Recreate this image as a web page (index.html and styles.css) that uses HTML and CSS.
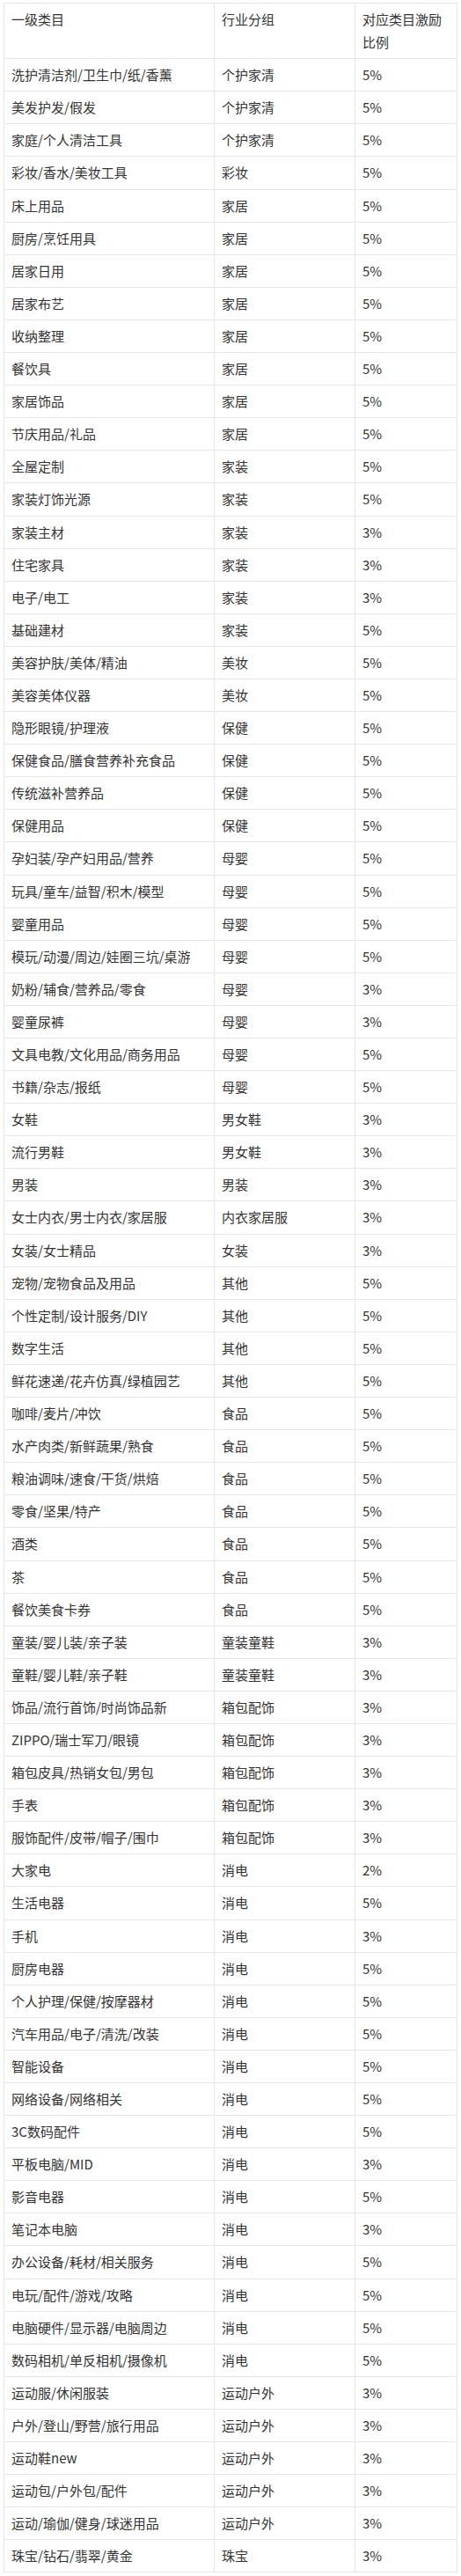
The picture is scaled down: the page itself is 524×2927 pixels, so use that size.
FILE: index.html
```html
<!DOCTYPE html>
<html lang="zh-CN">
<head>
<meta charset="utf-8">
<title>类目激励比例</title>
<link rel="stylesheet" href="styles.css">
</head>
<body>
<div class="page">
<table class="rate-table">
<colgroup>
<col class="col-cat">
<col class="col-group">
<col class="col-rate">
</colgroup>
<thead>
<tr><th>一级类目</th><th>行业分组</th><th>对应类目激励比例</th></tr>
</thead>
<tbody>
<tr><td>洗护清洁剂/卫生巾/纸/香薰</td><td>个护家清</td><td>5%</td></tr>
<tr><td>美发护发/假发</td><td>个护家清</td><td>5%</td></tr>
<tr><td>家庭/个人清洁工具</td><td>个护家清</td><td>5%</td></tr>
<tr><td>彩妆/香水/美妆工具</td><td>彩妆</td><td>5%</td></tr>
<tr><td>床上用品</td><td>家居</td><td>5%</td></tr>
<tr><td>厨房/烹饪用具</td><td>家居</td><td>5%</td></tr>
<tr><td>居家日用</td><td>家居</td><td>5%</td></tr>
<tr><td>居家布艺</td><td>家居</td><td>5%</td></tr>
<tr><td>收纳整理</td><td>家居</td><td>5%</td></tr>
<tr><td>餐饮具</td><td>家居</td><td>5%</td></tr>
<tr><td>家居饰品</td><td>家居</td><td>5%</td></tr>
<tr><td>节庆用品/礼品</td><td>家居</td><td>5%</td></tr>
<tr><td>全屋定制</td><td>家装</td><td>5%</td></tr>
<tr><td>家装灯饰光源</td><td>家装</td><td>5%</td></tr>
<tr><td>家装主材</td><td>家装</td><td>3%</td></tr>
<tr><td>住宅家具</td><td>家装</td><td>3%</td></tr>
<tr><td>电子/电工</td><td>家装</td><td>3%</td></tr>
<tr><td>基础建材</td><td>家装</td><td>5%</td></tr>
<tr><td>美容护肤/美体/精油</td><td>美妆</td><td>5%</td></tr>
<tr><td>美容美体仪器</td><td>美妆</td><td>5%</td></tr>
<tr><td>隐形眼镜/护理液</td><td>保健</td><td>5%</td></tr>
<tr><td>保健食品/膳食营养补充食品</td><td>保健</td><td>5%</td></tr>
<tr><td>传统滋补营养品</td><td>保健</td><td>5%</td></tr>
<tr><td>保健用品</td><td>保健</td><td>5%</td></tr>
<tr><td>孕妇装/孕产妇用品/营养</td><td>母婴</td><td>5%</td></tr>
<tr><td>玩具/童车/益智/积木/模型</td><td>母婴</td><td>5%</td></tr>
<tr><td>婴童用品</td><td>母婴</td><td>5%</td></tr>
<tr><td>模玩/动漫/周边/娃圈三坑/桌游</td><td>母婴</td><td>5%</td></tr>
<tr><td>奶粉/辅食/营养品/零食</td><td>母婴</td><td>3%</td></tr>
<tr><td>婴童尿裤</td><td>母婴</td><td>3%</td></tr>
<tr><td>文具电教/文化用品/商务用品</td><td>母婴</td><td>5%</td></tr>
<tr><td>书籍/杂志/报纸</td><td>母婴</td><td>5%</td></tr>
<tr><td>女鞋</td><td>男女鞋</td><td>3%</td></tr>
<tr><td>流行男鞋</td><td>男女鞋</td><td>3%</td></tr>
<tr><td>男装</td><td>男装</td><td>3%</td></tr>
<tr><td>女士内衣/男士内衣/家居服</td><td>内衣家居服</td><td>3%</td></tr>
<tr><td>女装/女士精品</td><td>女装</td><td>3%</td></tr>
<tr><td>宠物/宠物食品及用品</td><td>其他</td><td>5%</td></tr>
<tr><td>个性定制/设计服务/DIY</td><td>其他</td><td>5%</td></tr>
<tr><td>数字生活</td><td>其他</td><td>5%</td></tr>
<tr><td>鲜花速递/花卉仿真/绿植园艺</td><td>其他</td><td>5%</td></tr>
<tr><td>咖啡/麦片/冲饮</td><td>食品</td><td>5%</td></tr>
<tr><td>水产肉类/新鲜蔬果/熟食</td><td>食品</td><td>5%</td></tr>
<tr><td>粮油调味/速食/干货/烘焙</td><td>食品</td><td>5%</td></tr>
<tr><td>零食/坚果/特产</td><td>食品</td><td>5%</td></tr>
<tr><td>酒类</td><td>食品</td><td>5%</td></tr>
<tr><td>茶</td><td>食品</td><td>5%</td></tr>
<tr><td>餐饮美食卡券</td><td>食品</td><td>5%</td></tr>
<tr><td>童装/婴儿装/亲子装</td><td>童装童鞋</td><td>3%</td></tr>
<tr><td>童鞋/婴儿鞋/亲子鞋</td><td>童装童鞋</td><td>3%</td></tr>
<tr><td>饰品/流行首饰/时尚饰品新</td><td>箱包配饰</td><td>3%</td></tr>
<tr><td>ZIPPO/瑞士军刀/眼镜</td><td>箱包配饰</td><td>3%</td></tr>
<tr><td>箱包皮具/热销女包/男包</td><td>箱包配饰</td><td>3%</td></tr>
<tr><td>手表</td><td>箱包配饰</td><td>3%</td></tr>
<tr><td>服饰配件/皮带/帽子/围巾</td><td>箱包配饰</td><td>3%</td></tr>
<tr><td>大家电</td><td>消电</td><td>2%</td></tr>
<tr><td>生活电器</td><td>消电</td><td>5%</td></tr>
<tr><td>手机</td><td>消电</td><td>3%</td></tr>
<tr><td>厨房电器</td><td>消电</td><td>5%</td></tr>
<tr><td>个人护理/保健/按摩器材</td><td>消电</td><td>5%</td></tr>
<tr><td>汽车用品/电子/清洗/改装</td><td>消电</td><td>5%</td></tr>
<tr><td>智能设备</td><td>消电</td><td>5%</td></tr>
<tr><td>网络设备/网络相关</td><td>消电</td><td>5%</td></tr>
<tr><td>3C数码配件</td><td>消电</td><td>5%</td></tr>
<tr><td>平板电脑/MID</td><td>消电</td><td>3%</td></tr>
<tr><td>影音电器</td><td>消电</td><td>5%</td></tr>
<tr><td>笔记本电脑</td><td>消电</td><td>3%</td></tr>
<tr><td>办公设备/耗材/相关服务</td><td>消电</td><td>5%</td></tr>
<tr><td>电玩/配件/游戏/攻略</td><td>消电</td><td>5%</td></tr>
<tr><td>电脑硬件/显示器/电脑周边</td><td>消电</td><td>5%</td></tr>
<tr><td>数码相机/单反相机/摄像机</td><td>消电</td><td>5%</td></tr>
<tr><td>运动服/休闲服装</td><td>运动户外</td><td>3%</td></tr>
<tr><td>户外/登山/野营/旅行用品</td><td>运动户外</td><td>3%</td></tr>
<tr><td>运动鞋new</td><td>运动户外</td><td>3%</td></tr>
<tr><td>运动包/户外包/配件</td><td>运动户外</td><td>3%</td></tr>
<tr><td>运动/瑜伽/健身/球迷用品</td><td>运动户外</td><td>3%</td></tr>
<tr><td>珠宝/钻石/翡翠/黄金</td><td>珠宝</td><td>3%</td></tr>
</tbody>
</table>
</div>
</body>
</html>
```
FILE: styles.css
```css
html, body {
  margin: 0;
  padding: 0;
  background: #ffffff;
}

.page {
  padding: 3px 0 5px 4px;
}

.rate-table {
  width: 515px;
  table-layout: fixed;
  border-collapse: collapse;
  font-family: "Noto Sans CJK SC", "Noto Sans", sans-serif;
  font-size: 15px;
  line-height: 1.74;
  color: #333333;
}

.col-cat { width: 239px; }
.col-group { width: 160px; }
.col-rate { width: 116px; }

.rate-table th,
.rate-table td {
  border: 1px solid #e6e6e6;
  padding: 5px 8px;
  text-align: left;
  vertical-align: top;
  font-weight: normal;
  word-break: break-all;
}
```
